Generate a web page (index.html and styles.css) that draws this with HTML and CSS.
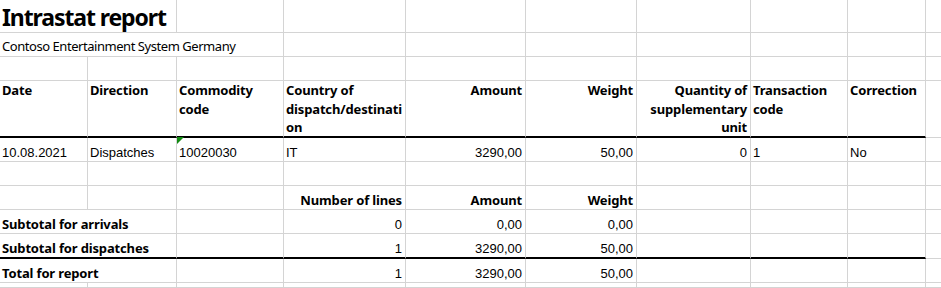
FILE: index.html
```html
<!DOCTYPE html>
<html lang="en">
<head>
<meta charset="utf-8">
<title>Intrastat report</title>
<link rel="stylesheet" href="styles.css">
</head>
<body>
<div class="sheet">
  <!-- row 1 -->
  <div class="c title span2">Intrastat report</div>
  <div class="c"></div><div class="c"></div><div class="c"></div><div class="c"></div><div class="c"></div><div class="c"></div><div class="c"></div><div class="c last"></div>
  <!-- row 2 -->
  <div class="c subtitle span3">Contoso Entertainment System Germany</div>
  <div class="c"></div><div class="c"></div><div class="c"></div><div class="c"></div><div class="c"></div><div class="c"></div><div class="c last"></div>
  <!-- row 3 -->
  <div class="c"></div><div class="c"></div><div class="c"></div><div class="c"></div><div class="c"></div><div class="c"></div><div class="c"></div><div class="c"></div><div class="c"></div><div class="c last"></div>
  <!-- row 4 header -->
  <div class="c h thick">Date</div>
  <div class="c h thick">Direction</div>
  <div class="c h thick">Commodity code</div>
  <div class="c h thick">Country of<br>dispatch/destinati<br>on</div>
  <div class="c h thick r">Amount</div>
  <div class="c h thick r">Weight</div>
  <div class="c h thick r">Quantity of supplementary unit</div>
  <div class="c h thick">Transaction code</div>
  <div class="c h thick">Correction</div>
  <div class="c last"></div>
  <!-- row 5 data -->
  <div class="c d">10.08.2021</div>
  <div class="c d">Dispatches</div>
  <div class="c d flag">10020030</div>
  <div class="c d">IT</div>
  <div class="c d r">3290,00</div>
  <div class="c d r">50,00</div>
  <div class="c d r">0</div>
  <div class="c d">1</div>
  <div class="c d">No</div>
  <div class="c last"></div>
  <!-- row 6 -->
  <div class="c"></div><div class="c"></div><div class="c"></div><div class="c"></div><div class="c"></div><div class="c"></div><div class="c"></div><div class="c"></div><div class="c"></div><div class="c last"></div>
  <!-- row 7 -->
  <div class="c"></div><div class="c"></div><div class="c"></div>
  <div class="c b r">Number of lines</div>
  <div class="c b r">Amount</div>
  <div class="c b r">Weight</div>
  <div class="c"></div><div class="c"></div><div class="c"></div><div class="c last"></div>
  <!-- row 8 -->
  <div class="c b span2">Subtotal for arrivals</div>
  <div class="c"></div>
  <div class="c d r">0</div>
  <div class="c d r">0,00</div>
  <div class="c d r">0,00</div>
  <div class="c"></div><div class="c"></div><div class="c"></div><div class="c last"></div>
  <!-- row 9 -->
  <div class="c b span2 thick">Subtotal for dispatches</div>
  <div class="c thick"></div>
  <div class="c d r thick">1</div>
  <div class="c d r thick">3290,00</div>
  <div class="c d r thick">50,00</div>
  <div class="c thick"></div><div class="c thick"></div><div class="c thick"></div><div class="c last"></div>
  <!-- row 10 -->
  <div class="c b span2">Total for report</div>
  <div class="c"></div>
  <div class="c d r">1</div>
  <div class="c d r">3290,00</div>
  <div class="c d r">50,00</div>
  <div class="c"></div><div class="c"></div><div class="c"></div><div class="c last"></div>
  <!-- row 11 -->
  <div class="c"></div><div class="c"></div><div class="c"></div><div class="c"></div><div class="c"></div><div class="c"></div><div class="c"></div><div class="c"></div><div class="c"></div><div class="c last"></div>
</div>
</body>
</html>
```

FILE: styles.css
```css
html, body {
  margin: 0;
  padding: 0;
  background: #ffffff;
}

body {
  overflow: hidden;
  color: #000000;
}

.sheet {
  display: grid;
  grid-template-columns: 88px 89px 107px 122px 120px 111px 114px 97px 78px 1fr;
  grid-template-rows: 33px 24px 24px 57px 24px 24px 24px 24px 25px 24px 5px;
  width: 941px;
  height: 288px;
  overflow: hidden;
}

.c {
  box-sizing: border-box;
  border-right: 1px solid #d4d4d4;
  border-bottom: 1px solid #d4d4d4;
  display: flex;
  align-items: flex-end;
  padding: 0 2px 0 2px;
  white-space: nowrap;
  min-width: 0;
}

.c.last {
  border-right: none;
}

.span2 { grid-column: span 2; }
.span3 { grid-column: span 3; }

.title {
  font-family: "Noto Sans", sans-serif;
  font-weight: 700;
  font-size: 23px;
  line-height: 30px;
  padding-bottom: 0;
  letter-spacing: -1.1px;
}

.subtitle {
  font-family: "Noto Sans", sans-serif;
  font-size: 13px;
  line-height: 19px;
  padding-bottom: 0;
  letter-spacing: -0.45px;
}

.h {
  font-family: "Noto Sans", sans-serif;
  font-weight: 700;
  font-size: 13px;
  line-height: 18.5px;
  white-space: normal;
  display: block;
  letter-spacing: -0.15px;
}

.b {
  font-family: "Noto Sans", sans-serif;
  font-weight: 700;
  font-size: 13px;
  line-height: 18.5px;
  letter-spacing: -0.15px;
}

.d {
  font-family: "Liberation Sans", Arial, sans-serif;
  font-size: 13px;
  line-height: 15px;
  padding-bottom: 1px;
}

.r {
  justify-content: flex-end;
  text-align: right;
  padding-right: 3px;
}

.thick {
  border-bottom: 2px solid #000000;
}

.flag {
  position: relative;
}

.flag::before {
  content: "";
  position: absolute;
  left: 0;
  top: -1px;
  width: 0;
  height: 0;
  border-top: 7px solid #128a12;
  border-right: 7px solid transparent;
}
```
